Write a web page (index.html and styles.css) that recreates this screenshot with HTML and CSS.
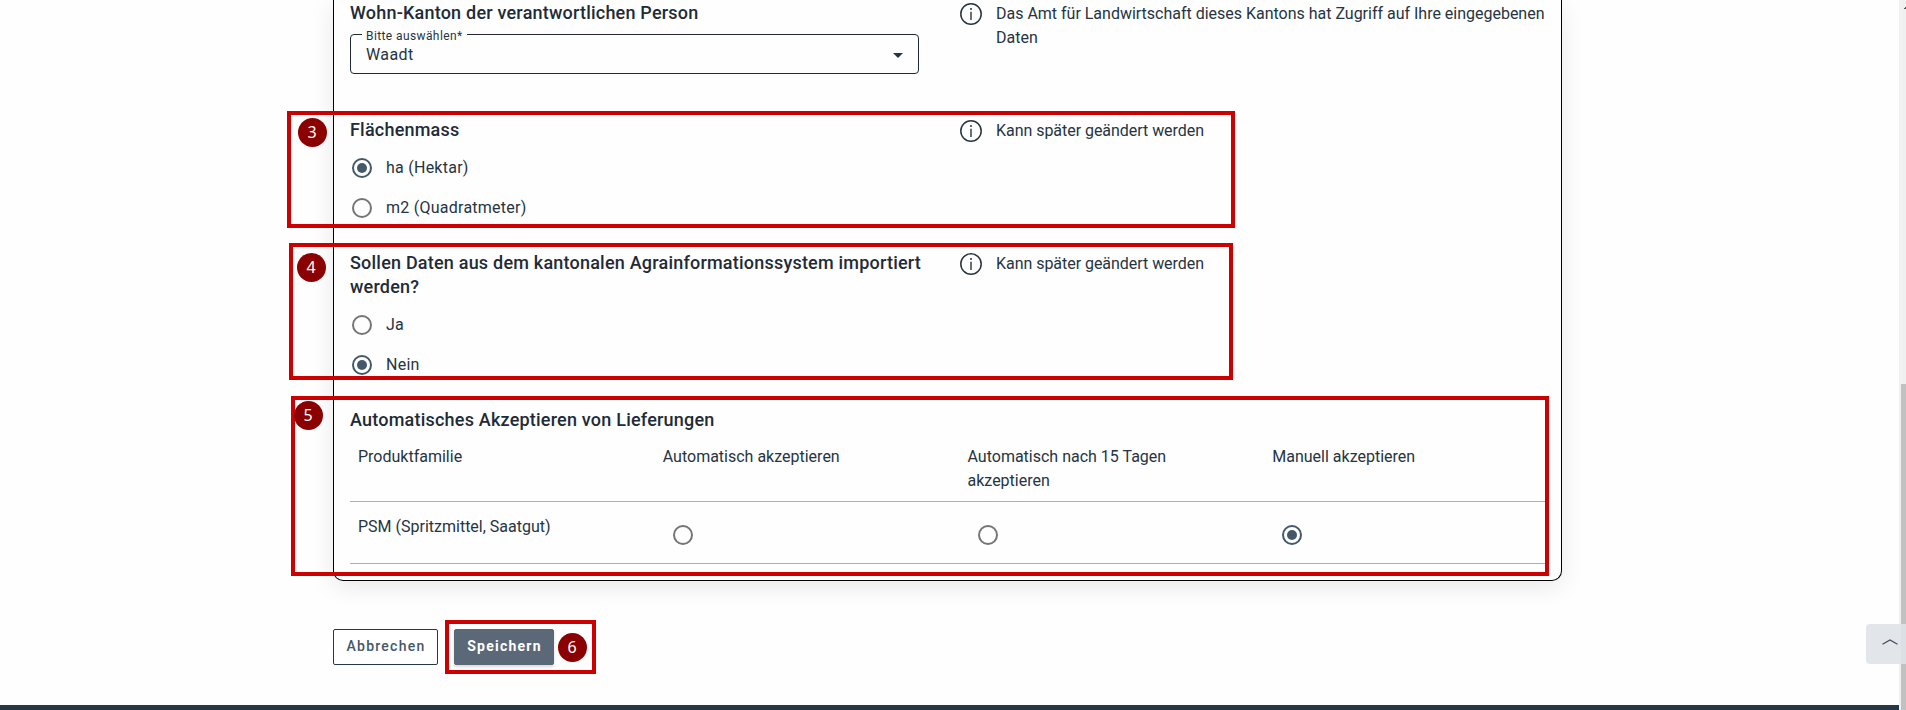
FILE: index.html
```html
<!DOCTYPE html>
<html lang="de">
<head>
<meta charset="utf-8">
<title>Einstellungen</title>
<link rel="stylesheet" href="styles.css">
</head>
<body>
<svg class="defs" aria-hidden="true">
  <symbol id="info" viewBox="0 0 22 22">
    <circle cx="11" cy="11" r="10.2" fill="none" stroke="currentColor" stroke-width="1.5"/>
    <path d="M11 8.7V17" stroke="currentColor" stroke-width="1.4"/>
    <circle cx="11" cy="6" r="1" fill="currentColor"/>
  </symbol>
</svg>
<main class="page">
  <section class="card">
    <div class="row row-canton">
      <div class="field">
        <h2 class="title">Wohn-Kanton der verantwortlichen Person</h2>
        <div class="select">
          <span class="select-label">Bitte auswählen*</span>
          <span class="select-value">Waadt</span>
          <svg class="arrow" viewBox="0 0 10 5"><path d="M0 0h10L5 5z" fill="currentColor"/></svg>
        </div>
      </div>
      <div class="hint"><svg class="info"><use href="#info"/></svg><p class="hint-text wide">Das Amt für Landwirtschaft dieses Kantons hat Zugriff auf Ihre eingegebenen Daten</p></div>
    </div>
    <div class="row row-area">
      <div class="field">
        <h2 class="title">Flächenmass</h2>
        <div class="options">
          <label class="option"><span class="radio checked"></span><span class="label">ha (Hektar)</span></label>
          <label class="option"><span class="radio"></span><span class="label">m2 (Quadratmeter)</span></label>
        </div>
      </div>
      <div class="hint"><svg class="info"><use href="#info"/></svg><p class="hint-text">Kann später geändert werden</p></div>
    </div>
    <div class="row row-import">
      <div class="field">
        <h2 class="title">Sollen Daten aus dem kantonalen Agrainformationssystem importiert werden?</h2>
        <div class="options">
          <label class="option"><span class="radio"></span><span class="label">Ja</span></label>
          <label class="option"><span class="radio checked"></span><span class="label">Nein</span></label>
        </div>
      </div>
      <div class="hint"><svg class="info"><use href="#info"/></svg><p class="hint-text">Kann später geändert werden</p></div>
    </div>
    <h2 class="title">Automatisches Akzeptieren von Lieferungen</h2>
    <div class="table">
      <div class="tr head">
        <div class="td">Produktfamilie</div><div class="td">Automatisch akzeptieren</div><div class="td">Automatisch nach 15 Tagen akzeptieren</div><div class="td">Manuell akzeptieren</div>
      </div>
      <div class="tr data">
        <div class="td">PSM (Spritzmittel, Saatgut)</div><div class="td pick"><span class="radio"></span></div><div class="td pick"><span class="radio"></span></div><div class="td pick"><span class="radio checked"></span></div>
      </div>
    </div>
  </section>
  <div class="actions">
    <button class="btn">Abbrechen</button>
    <button class="btn primary">Speichern</button>
  </div>
  <footer class="footer"></footer>
</main>
<aside class="scrollbar"><svg class="scroll-up" viewBox="0 0 2 2"><path d="M0 2V1h1V0h1v2z" fill="#555"/></svg><div class="thumb"></div></aside>
<button class="to-top" aria-label="Nach oben"><svg class="chevron" viewBox="0 0 16 6"><path d="M.5 5.3L8 1l7.500 4.300" fill="none" stroke="#444f59" stroke-width="1.300"/></svg></button>

<div class="mark mark3"></div><div class="mark mark4"></div><div class="mark mark5"></div><div class="mark mark6"></div>
<div class="badge badge3">3</div><div class="badge badge4">4</div><div class="badge badge5">5</div><div class="badge badge6">6</div>
</body>
</html>
```
FILE: styles.css
```css
* { box-sizing: border-box; }
body {
  margin: 0; height: 710px; position: relative; overflow: hidden; display: flex;
  background: #fefefe; color: #263441;
  font: 400 16px/24px Roboto, sans-serif;
}
.defs { position: absolute; width: 0; height: 0; }
.page { flex: 1; height: 710px; display: flex; flex-direction: column; }
.card {
  margin-left: 333px; width: 1229px; height: 581px; flex: none;
  padding: 1px 16px 0; border: 1px solid #000; border-top: 0; border-radius: 0 0 10px 10px;
  box-shadow: 0 6px 24px rgba(0, 0, 0, .09);
}
.row { display: grid; grid-template-columns: 569px 1fr; column-gap: 41px; }
.row-canton { height: 117px; }
.row-area { height: 133px; }
.row-import { height: 157px; }
.title { margin: 0; color: #1f2b37; font-size: 18px; line-height: 24px; font-weight: 500; letter-spacing: .21px; }
.field .title { margin-right: -10px; }
.select {
  position: relative; margin-top: 9px; height: 40px; padding: 1px 15px 0;
  display: flex; align-items: center; justify-content: space-between;
  border: 1px solid #1f2937; border-radius: 4px;
}
.select-label {
  position: absolute; left: 11px; top: -7px; width: 105px; padding-left: 4px;
  background: #fefefe; font-size: 12px; line-height: 16px; letter-spacing: .4px;
}
.select-value { letter-spacing: .4px; padding-top: 1px; }
.arrow { width: 10px; height: 5px; margin-top: 2px; }
.hint { display: flex; gap: 14px; }
.info { width: 22px; height: 22px; margin-top: 2px; flex: none; }
.hint-text { margin: 1px -8px 0 0; letter-spacing: -.04px; }
.wide { letter-spacing: -.01px; }
.options { margin-top: 6px; padding-left: 2px; }
.option { height: 40px; display: flex; align-items: center; gap: 14px; }
.label { letter-spacing: .25px; }
.radio {
  width: 20px; height: 20px; flex: none; border: 2px solid #757575; border-radius: 50%;
  display: flex; align-items: center; justify-content: center;
}
.radio.checked { border-color: #44586a; }
.radio.checked::after { content: ""; width: 10px; height: 10px; border-radius: 50%; background: #44586a; }
.tr { display: grid; grid-template-columns: repeat(4, 304.75px); width: 1195px; border-bottom: 1px solid #afafaf; }
.td { padding: 0 60px 0 8px; }
.head { margin-top: 13px; height: 57px; }
.data { height: 62px; padding-top: 13px; }
.pick { padding: 10px 0 0 18px; }
.actions { margin: 48px 0 0 333px; display: flex; gap: 16px; }
.btn {
  width: 105px; height: 36px; padding: 0 0 0 1px; border: 1px solid #26394a; border-radius: 2px;
  background: #fff; color: #44586a; font: 500 14px/32px Roboto, sans-serif; letter-spacing: 1.25px;
  display: flex; justify-content: center;
}
.primary { width: 100px; border-color: #5a6877; background: #5a6877; color: #fff; font-weight: 700; box-shadow: 0 2px 3px rgba(0, 0, 0, .15); }
.footer { margin-top: auto; height: 5px; background: #263746; }
.scrollbar { width: 7px; height: 710px; padding: 7px 0 0 2px; background: #f0f0f0; display: flex; flex-direction: column; justify-content: space-between; }
.scroll-up { width: 2px; height: 2px; align-self: flex-end; }
.thumb { height: 326px; background: #c1c1c1; }
.to-top {
  position: absolute; right: 0; top: 624px; width: 40px; height: 40px; padding: 0 0 4px 16px;
  display: flex; align-items: center; border: 0; border-radius: 4px 0 0 4px; background: rgba(223, 227, 233, .9);
}
.chevron { width: 16px; height: 6px; }
.mark { position: absolute; border: 4px solid #cc0000; }
.mark3 { left: 287px; top: 111px; width: 948px; height: 117px; }
.mark4 { left: 289px; top: 243px; width: 944px; height: 137px; }
.mark5 { left: 291px; top: 396px; width: 1258px; height: 180px; }
.mark6 { left: 445px; top: 620px; width: 151px; height: 54px; }
.badge {
  position: absolute; width: 29px; height: 29px; border-radius: 50%; background: #8b0000; color: #fff;
  font: 16px/28px "Noto Sans", sans-serif; text-align: center; padding-right: 1px;
}
.badge3 { left: 298px; top: 118px; }
.badge4 { left: 297px; top: 253px; }
.badge5 { left: 294px; top: 401px; }
.badge6 { left: 558px; top: 633px; }
```
